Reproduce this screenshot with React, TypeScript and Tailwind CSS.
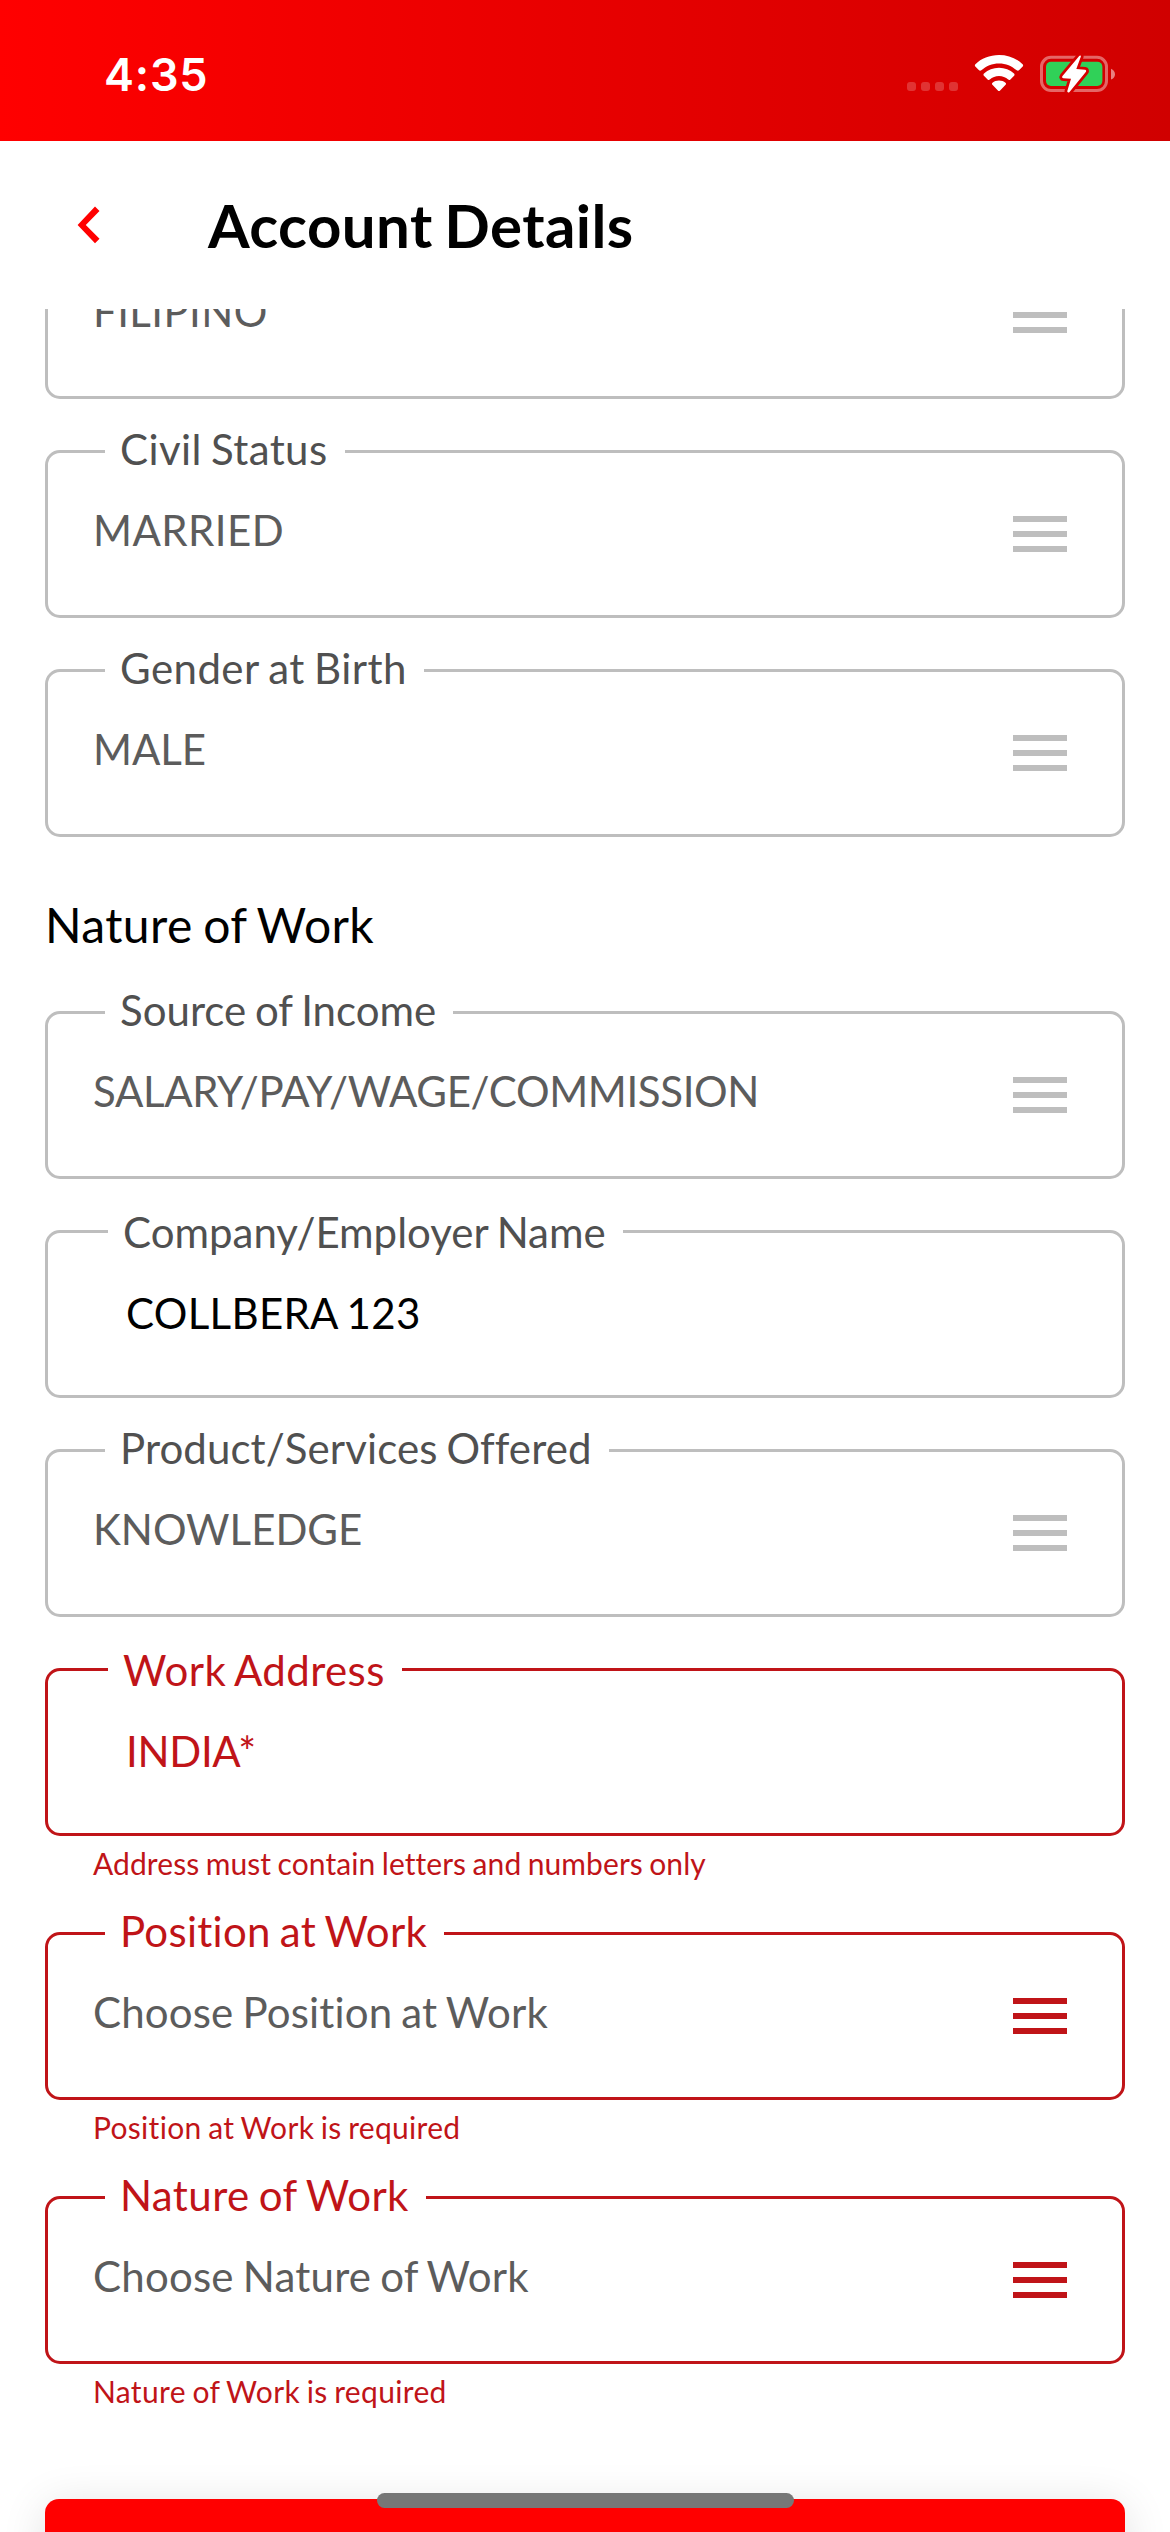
type FieldProps = {
  label?: string;
  labelTracking?: string;
  value: string;
  valueTracking?: string;
  kind?: "select" | "input";
  error?: string;
  errorTracking?: string;
};

function MenuIcon({ invalid }: { invalid: boolean }) {
  const bar = invalid ? "h-[6px] w-full bg-[#c01418]" : "h-[6px] w-full bg-[#bebebe]";
  return (
    <div className="mt-[63px] flex h-[36px] w-[54px] flex-col justify-between">
      <span className={bar} />
      <span className={bar} />
      <span className={bar} />
    </div>
  );
}

function Field({
  label,
  labelTracking = "",
  value,
  valueTracking = "",
  kind = "select",
  error,
  errorTracking = "",
}: FieldProps) {
  const invalid = Boolean(error);
  const isInput = kind === "input";
  const border = invalid ? "border-[#c01418]" : "border-[#bebebe]";
  const labelColor = invalid ? "text-[#c01418]" : "text-[#505050]";
  const labelPlace = isInput ? "left-[60px] -top-[26px] pl-[15px]" : "left-[57px] -top-[29px] pl-[15px]";
  const valueColor = isInput ? (invalid ? "text-[#c01418]" : "text-black") : "text-[#5c5c5c]";
  const valuePlace = isInput ? "ml-[78px] mt-[55px]" : "ml-[45px] mt-[52px]";
  return (
    <div>
      <div className={`relative flex h-[168px] items-start justify-between rounded-[15px] border-[3px] pr-[55px] ${border}`}>
        {label && (
          <span
            className={`absolute whitespace-nowrap bg-white pr-[17px] text-[42px] leading-[50px] [word-spacing:-1.9px] ${labelPlace} ${labelColor} ${labelTracking}`}
          >
            {label}
          </span>
        )}
        <span
          className={`whitespace-nowrap text-[42px] leading-[50px] [word-spacing:-1.9px] ${valuePlace} ${valueColor} ${valueTracking}`}
        >
          {value}
        </span>
        {!isInput && <MenuIcon invalid={invalid} />}
      </div>
      {error && (
        <p
          className={`mt-[9px] h-[36px] whitespace-nowrap pl-[48px] text-[30px] leading-[36px] text-[#c01418] [word-spacing:-1.35px] ${errorTracking}`}
        >
          {error}
        </p>
      )}
    </div>
  );
}

function StatusBar() {
  return (
    <div className="flex h-[141px] shrink-0 items-start justify-between bg-linear-to-r from-[#ff0000] to-[#d00000] pl-[104px] pr-[52px]">
      <span className="mt-[48px] font-[Inter,sans-serif] text-[45px] font-semibold leading-[54px] tracking-[0.78px] text-white">
        4:35
      </span>
      <div className="mt-[50px] flex items-start">
        <div className="mt-[32px] flex gap-[5px]">
          {[0, 1, 2, 3].map((i) => (
            <span key={i} className="size-[9px] rounded-[3px] bg-white/20" />
          ))}
        </div>
        <svg className="ml-[14px]" width="54" height="46" viewBox="0 0 54 46" fill="white">
          <path d="M27 5C36.3 5 44.800 8.500 50.600 14.200C51.300 14.900 51.300 15.900 50.700 16.500L47 20.300C46.300 21 45.400 20.900 44.700 20.300C40 16.100 33.800 13.400 27 13.400C20.200 13.400 14 16.100 9.300 20.300C8.600 20.900 7.700 21 7 20.300L3.300 16.500C2.700 15.900 2.700 14.900 3.400 14.200C9.200 8.500 17.700 5 27 5Z" />
          <path d="M27 17.800C32.800 17.800 38 20 42 23.500C42.700 24.200 42.700 25.100 42.100 25.700L38.400 29.400C37.700 30.100 36.900 30 36.200 29.500C33.700 27.400 30.500 26.100 27 26.100C23.500 26.100 20.300 27.400 17.800 29.500C17.100 30 16.300 30.100 15.600 29.400L11.900 25.700C11.300 25.100 11.300 24.200 12 23.500C16 20 21.200 17.800 27 17.800Z" />
          <path d="M27 30.600C29.500 30.600 31.800 31.400 33.500 32.800C34.200 33.400 34.200 34.200 33.600 34.800L28.100 40.400C27.400 41.100 26.600 41.100 25.900 40.400L20.400 34.800C19.800 34.200 19.800 33.400 20.500 32.800C22.200 31.400 24.500 30.600 27 30.600Z" />
        </svg>
        <svg className="ml-[12px]" width="80" height="46" viewBox="0 0 80 46">
          <rect x="3.500" y="7.300" width="65" height="33.200" rx="9.500" fill="none" stroke="white" strokeOpacity="0.4" strokeWidth="3" />
          <path d="M73 18.800C75.500 19.700 77 21.800 77 24.200C77 26.600 75.500 28.700 73 29.600Z" fill="white" fillOpacity="0.5" />
          <rect x="8" y="11.800" width="56.400" height="24.200" rx="5" fill="#30d158" />
          <path
            d="M41.200 6L24.500 26C23.700 27.100 24.200 28.200 25.500 28.300L33 28.800L29.300 41C29.100 42.300 30.600 42.900 31.500 41.900L47.800 22C48.600 20.900 48.200 19.900 47 19.700L38.300 18.900L42.800 6.800C43.100 5.500 42 5 41.200 6Z"
            fill="white"
            stroke="#d60000"
            strokeWidth="5.500"
            strokeLinejoin="round"
            paintOrder="stroke"
          />
        </svg>
      </div>
    </div>
  );
}

function Header() {
  return (
    <header className="flex h-[168px] shrink-0 items-start bg-white pl-[72px]">
      <svg className="mt-[60px]" width="48" height="48" viewBox="0 0 48 48" fill="#ff0000">
        <path d="M23 5.500L27.500 10L13.800 24L27.500 37.800L23 42.200L5.600 24Z" />
      </svg>
      <h1 className="ml-[88px] mt-[48px] whitespace-nowrap text-[60px] font-bold leading-[72px] tracking-[0.43px] text-black [word-spacing:-3.4px]">
        Account Details
      </h1>
    </header>
  );
}

export default function App() {
  return (
    <div className="relative flex h-[2532px] w-[1170px] flex-col overflow-hidden bg-white font-[Lato,sans-serif] [font-variant-ligatures:none]">
      <StatusBar />
      <Header />
      <main className="min-h-0 flex-1 overflow-hidden px-[45px]">
        <div className="-mt-[78px] flex flex-col gap-[51px]">
          <Field value="FILIPINO" valueTracking="tracking-[0.4px]" />
          <Field
            label="Civil Status"
            labelTracking="tracking-[0.39px]"
            value="MARRIED"
            valueTracking="tracking-[0.45px]"
          />
          <Field
            label="Gender at Birth"
            labelTracking="tracking-[0.45px]"
            value="MALE"
            valueTracking="tracking-[-0.1px]"
          />
        </div>
        <h2 className="mb-[57px] mt-[59px] whitespace-nowrap text-[48px] leading-[58px] tracking-[0.39px] text-black [word-spacing:-2.1px]">
          Nature of Work
        </h2>
        <div className="flex flex-col gap-[51px]">
          <Field
            label="Source of Income"
            value="SALARY/PAY/WAGE/COMMISSION"
            valueTracking="tracking-[-0.36px]"
          />
          <Field
            kind="input"
            label="Company/Employer Name"
            value="COLLBERA 123"
            valueTracking="tracking-[0.31px]"
          />
          <Field label="Product/Services Offered" labelTracking="tracking-[0.09px]" value="KNOWLEDGE" />
          <Field
            kind="input"
            label="Work Address"
            labelTracking="tracking-[0.4px]"
            value="INDIA*"
            valueTracking="tracking-[-0.29px]"
            error="Address must contain letters and numbers only"
            errorTracking="tracking-[0.08px]"
          />
          <Field
            label="Position at Work"
            labelTracking="tracking-[0.26px]"
            value="Choose Position at Work"
            valueTracking="tracking-[0.16px]"
            error="Position at Work is required"
            errorTracking="tracking-[0.3px]"
          />
          <Field
            label="Nature of Work"
            labelTracking="tracking-[0.41px]"
            value="Choose Nature of Work"
            valueTracking="tracking-[0.21px]"
            error="Nature of Work is required"
            errorTracking="tracking-[0.34px]"
          />
        </div>
        <div className="mt-[90px] h-[150px] rounded-[14px] bg-[#ff0000] shadow-[0_6px_45px_rgba(0,0,0,0.12)]" />
      </main>
      <div className="absolute bottom-[24px] left-[377px] h-[15px] w-[417px] rounded-full bg-[#777777]" />
    </div>
  );
}
